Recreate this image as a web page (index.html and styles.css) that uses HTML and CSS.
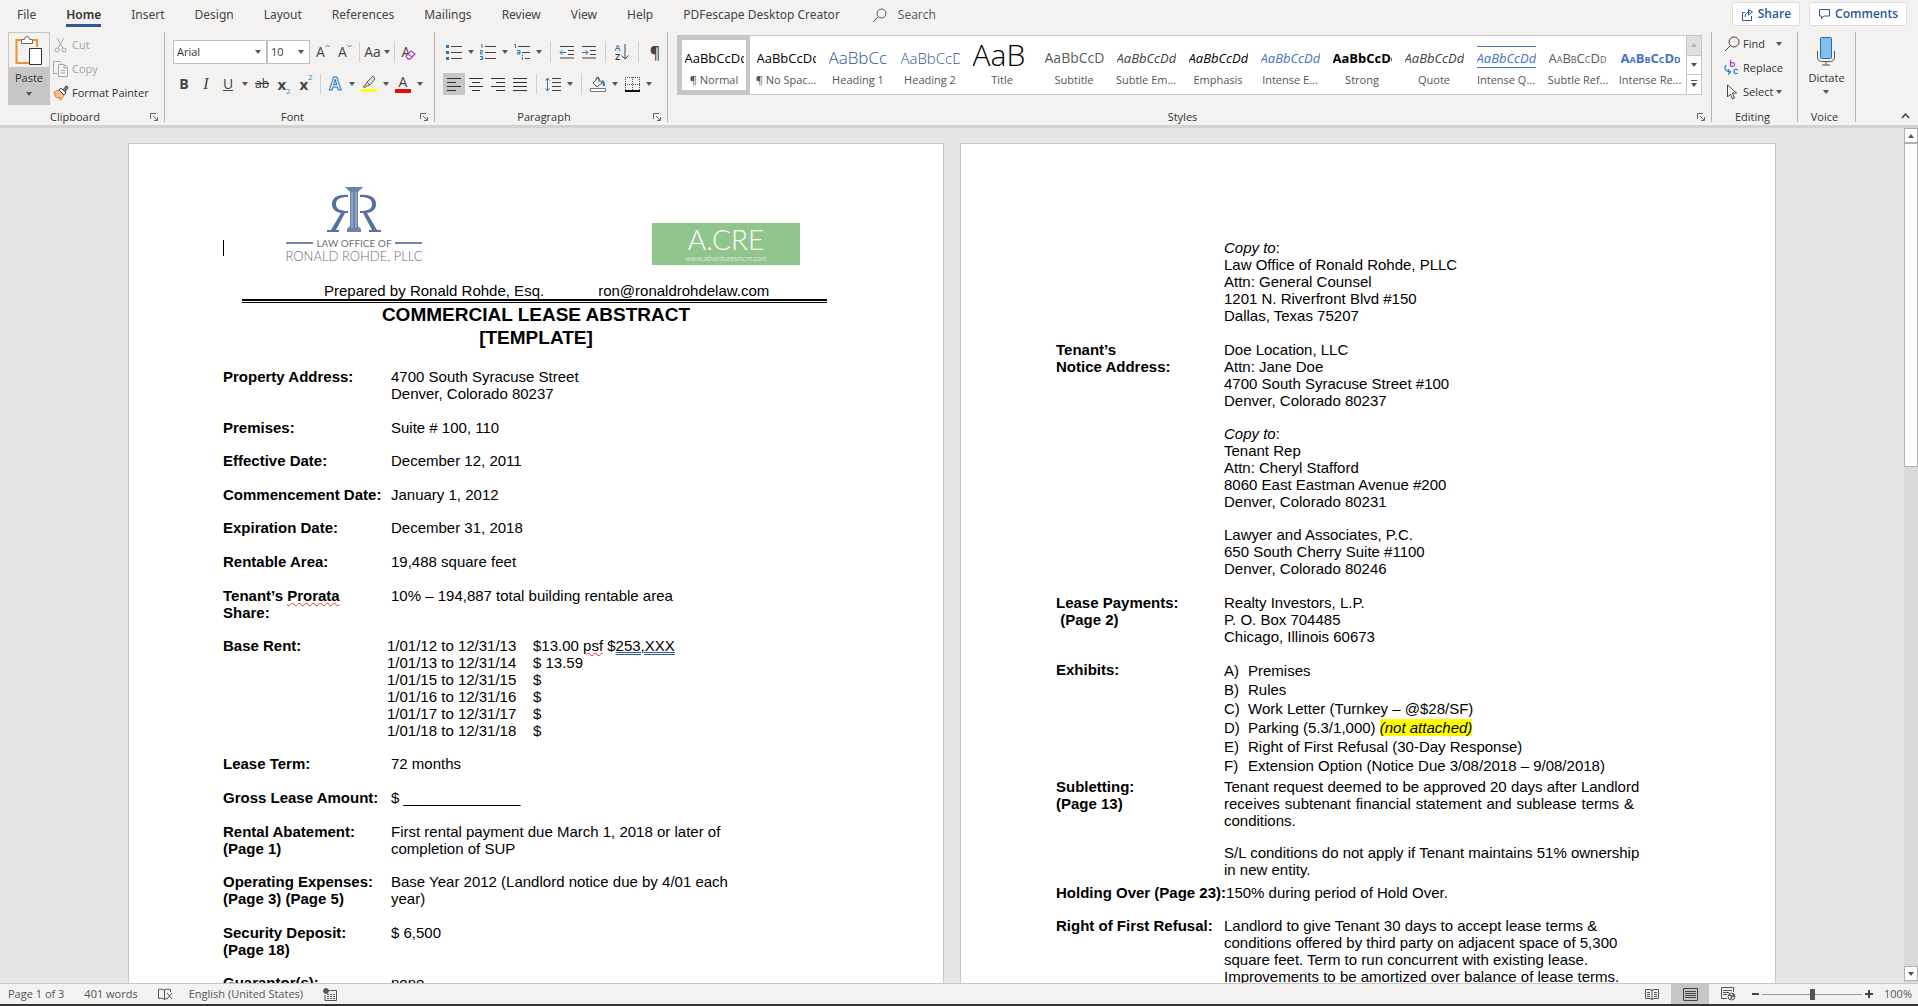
FILE: index.html
```html
<!DOCTYPE html>
<html lang="en">
<head>
<meta charset="utf-8">
<title>Commercial Lease Abstract</title>
<link rel="stylesheet" href="styles.css">
</head>
<body>
<header class="tabbar">
  <nav class="tabs">
    <button class="tab">File</button>
    <button class="tab active">Home</button>
    <button class="tab">Insert</button>
    <button class="tab">Design</button>
    <button class="tab">Layout</button>
    <button class="tab">References</button>
    <button class="tab">Mailings</button>
    <button class="tab">Review</button>
    <button class="tab">View</button>
    <button class="tab">Help</button>
    <button class="tab">PDFescape Desktop Creator</button>
  </nav>
  <label class="search">
    <svg width="15" height="15" viewBox="0 0 15 15" fill="none" stroke="#555"><circle cx="9.5" cy="5.5" r="4.5"/><path d="M6.3 8.7 1 14"/></svg>
    <input type="text" placeholder="Search" aria-label="Search">
  </label>
  <div class="actions">
    <button class="action"><svg width="13" height="13" viewBox="0 0 13 13" fill="none" stroke="#2b579a"><path d="M4 4.5H1.5v8h9V8M4 9c0-3 2-5 5-5M7.500 1.500 11.500 4l-4 3z"/></svg>Share</button>
    <button class="action"><svg width="13" height="12" viewBox="0 0 13 12" fill="none" stroke="#2b579a"><path d="M1.500 1.500h10v6.500H6L3.500 10.500V8h-2z"/></svg>Comments</button>
  </div>
</header>

<section class="ribbon">
  <div class="group clipboard">
    <div class="group-body">
      <button class="paste">
        <span class="paste-icon"><svg width="28" height="31" viewBox="0 0 28 31" fill="none"><path d="M6 5H1.500v23H14M18 5h4v7" stroke="#e8962e" stroke-width="2"/><path d="M6.500 8.500v-4h3c0-4 5-4 5 0h3v4z" fill="#fff" stroke="#666"/><path d="M14.500 13.500h12v16h-12z" fill="#fff" stroke="#333"/></svg></span>
        <span class="paste-label">Paste<i class="caret"></i></span>
      </button>
      <div class="stack">
        <button class="cmd off"><svg width="18" height="18" viewBox="0 0 18 18" fill="none" stroke="#a6a6a6"><path d="M5 2l6 10M12 2 6 12"/><circle cx="5" cy="14" r="2"/><circle cx="12" cy="14" r="2"/></svg>Cut</button>
        <button class="cmd off"><svg width="18" height="18" viewBox="0 0 18 18" fill="none" stroke="#a6a6a6"><path d="M5 13.500H1.500v-12H8l2 2"/><path d="M6.500 4.500h6l3 3v9h-9zM12 5v3h3M9 10.500h4M9 13h4"/></svg>Copy</button>
        <button class="cmd"><svg width="18" height="18" viewBox="0 0 18 18" fill="none"><path d="M2 8l5-2 5 5-3 5-2-1 1-2-3 1-2-2 1-2-2 0z" fill="#f6c48a" stroke="#e08a28"/><path d="M7 6l2-2 5 5-2 2z" fill="#fff" stroke="#444"/><path d="M11 6l3-4 2 1-1 2-2 3" fill="#888" stroke="#444"/></svg>Format Painter</button>
      </div>
    </div>
    <div class="group-label"><span>Clipboard</span><button class="launch" aria-label="Clipboard options"><svg width="8" height="8" viewBox="0 0 8 8" fill="none" stroke="#666"><path d="M.5 6V.5H6M3 3l4 4M7.500 4v3.500H4"/></svg></button></div>
  </div>

  <div class="group font">
    <div class="group-body rows">
      <div class="row">
        <div class="combo family"><select aria-label="Font"><option>Arial</option></select><i class="caret"></i></div>
        <div class="combo size"><select aria-label="Font size"><option>10</option></select><i class="caret"></i></div>
        <button class="tool letter grow" aria-label="Increase font size">A<svg width="5" height="4" viewBox="0 0 5 4" fill="none" stroke="#2b88c8"><path d="M.5 3 2.500 1l2 2"/></svg></button>
        <button class="tool letter grow" aria-label="Decrease font size">A<svg width="5" height="4" viewBox="0 0 5 4" fill="none" stroke="#2b88c8"><path d="M.5 1l2 2 2-2"/></svg></button>
        <i class="sep"></i>
        <button class="tool letter wide">Aa<i class="caret"></i></button>
        <i class="sep"></i>
        <button class="tool letter clear" aria-label="Clear formatting">A<svg width="11" height="10" viewBox="0 0 11 10" fill="#fff" stroke="#a54cb8" stroke-width="1.300"><path d="M1 6l5-5 4 3-5 5H3z"/><path d="M3 4l4 3"/></svg></button>
      </div>
      <div class="row">
        <button class="tool letter"><b>B</b></button>
        <button class="tool letter"><em class="serif">I</em></button>
        <button class="tool letter"><u>U</u></button>
        <button class="drop" aria-label="Underline styles"><i class="caret"></i></button>
        <button class="tool small"><s>ab</s></button>
        <button class="tool letter script"><b>x</b><sub>2</sub></button>
        <button class="tool letter script"><b>x</b><sup>2</sup></button>
        <i class="sep"></i>
        <button class="tool letter effect">A</button>
        <button class="drop" aria-label="Text effects"><i class="caret"></i></button>
        <button class="tool" aria-label="Highlight"><svg width="18" height="18" viewBox="0 0 18 18"><path d="M5 11l2-4 6-6 2 3-5 6-3 1-1 1H3z" fill="#ddd" stroke="#666"/><path d="M7 7l3 3" stroke="#666"/><path d="M1 14h16v3H1z" fill="#ff0"/></svg></button>
        <button class="drop" aria-label="Highlight colors"><i class="caret"></i></button>
        <button class="tool letter color">A</button>
        <button class="drop" aria-label="Font colors"><i class="caret"></i></button>
      </div>
    </div>
    <div class="group-label"><span>Font</span><button class="launch" aria-label="Font options"><svg width="8" height="8" viewBox="0 0 8 8" fill="none" stroke="#666"><path d="M.5 6V.5H6M3 3l4 4M7.500 4v3.500H4"/></svg></button></div>
  </div>

  <div class="group paragraph">
    <div class="group-body rows">
      <div class="row">
        <button class="tool" aria-label="Bullets"><svg width="16" height="16" viewBox="0 0 16 16"><path d="M0 1h3v3H0zM0 7h3v3H0zM0 13h3v3H0z" fill="#2b78b8"/><path d="M5 2.500h11M5 8.500h11M5 14.500h11" stroke="#444"/></svg></button>
        <button class="drop" aria-label="Bullet library"><i class="caret"></i></button>
        <button class="tool" aria-label="Numbering"><svg width="16" height="16" viewBox="0 0 16 16" fill="none"><path d="M1 .5h1V4M0 6.500h2.500v1.500H.5v2H3M0 12.500h2.500v3H0M1 14h1" stroke="#2b78b8"/><path d="M5 2.500h11M5 8.500h11M5 14.500h11" stroke="#444"/></svg></button>
        <button class="drop" aria-label="Numbering library"><i class="caret"></i></button>
        <button class="tool" aria-label="Multilevel list"><svg width="16" height="16" viewBox="0 0 16 16" fill="none"><path d="M0 .5h1.500V4M3 6.500h3V10H3.500V8.500H6M8.500 11v1M8.500 13v3" stroke="#2b78b8"/><path d="M4 2.500h12M8 8.500h8M11 14.500h5" stroke="#444"/></svg></button>
        <button class="drop" aria-label="Multilevel library"><i class="caret"></i></button>
        <i class="sep"></i>
        <button class="tool" aria-label="Decrease indent"><svg width="16" height="14" viewBox="0 0 16 14" fill="none"><path d="M1 1.500h14M9 5.500h6M9 9.500h6M1 13h14" stroke="#444"/><path d="M7 7.500H1M3.500 5 1 7.500 3.500 10" stroke="#2b78b8"/></svg></button>
        <button class="tool" aria-label="Increase indent"><svg width="16" height="14" viewBox="0 0 16 14" fill="none"><path d="M1 1.500h14M9 5.500h6M9 9.500h6M1 13h14" stroke="#444"/><path d="M1 7.500h6M4.500 5 7 7.500 4.500 10" stroke="#2b78b8"/></svg></button>
        <i class="sep"></i>
        <button class="tool sort" aria-label="Sort"><span class="az"><span>A</span><span>Z</span></span><svg width="8" height="16" viewBox="0 0 8 16" fill="none" stroke="#444"><path d="M4 0v15M.5 11.500 4 15l3.500-3.500"/></svg></button>
        <i class="sep"></i>
        <button class="tool letter mark">¶</button>
      </div>
      <div class="row">
        <button class="tool on" aria-label="Align left"><svg width="14" height="14" viewBox="0 0 14 14" stroke="#333"><path d="M0 1.500h14M0 5.500h9M0 9.500h14M0 13.500h9"/></svg></button>
        <button class="tool" aria-label="Center"><svg width="14" height="14" viewBox="0 0 14 14" stroke="#333"><path d="M0 1.500h14M3 5.500h8M0 9.500h14M3 13.500h8"/></svg></button>
        <button class="tool" aria-label="Align right"><svg width="14" height="14" viewBox="0 0 14 14" stroke="#333"><path d="M0 1.500h14M5 5.500h9M0 9.500h14M5 13.500h9"/></svg></button>
        <button class="tool" aria-label="Justify"><svg width="14" height="14" viewBox="0 0 14 14" stroke="#333"><path d="M0 1.500h14M0 5.500h14M0 9.500h14M0 13.500h14"/></svg></button>
        <i class="sep"></i>
        <button class="tool" aria-label="Line spacing"><svg width="16" height="15" viewBox="0 0 16 15" fill="none"><path d="M2.500 1v13M.5 3.500l2-2.500 2 2.500M.5 11.500l2 2.500 2-2.500" stroke="#2b78b8"/><path d="M7 1.500h9M7 5.500h9M7 9.500h9M7 13.500h9" stroke="#444"/></svg></button>
        <button class="drop" aria-label="Line spacing options"><i class="caret"></i></button>
        <i class="sep"></i>
        <button class="tool" aria-label="Shading"><svg width="16" height="16" viewBox="0 0 16 16" fill="none"><path d="M3 7l5-5 4 5-5 4zM6 4c0-4 3-4 3-1v3" stroke="#555"/><path d="M12 5c2 1 2 3 2 5" stroke="#2b78b8" stroke-width="2"/><path d="M.5 12.500h15v3H.5z" fill="#fff" stroke="#777"/></svg></button>
        <button class="drop" aria-label="Shading colors"><i class="caret"></i></button>
        <button class="tool" aria-label="Borders"><svg width="15" height="15" viewBox="0 0 15 15" fill="none" stroke="#555"><path d="M.5 0v14M14.500 0v14M7.500 0v14M0 .5h15M0 7.500h15" stroke-dasharray="1 1"/><path d="M0 14h15" stroke="#111" stroke-width="2"/></svg></button>
        <button class="drop" aria-label="Border styles"><i class="caret"></i></button>
      </div>
    </div>
    <div class="group-label"><span>Paragraph</span><button class="launch" aria-label="Paragraph options"><svg width="8" height="8" viewBox="0 0 8 8" fill="none" stroke="#666"><path d="M.5 6V.5H6M3 3l4 4M7.500 4v3.500H4"/></svg></button></div>
  </div>

  <div class="group styles">
    <div class="group-body">
      <div class="gallery">
        <button class="style chosen"><span class="sample">AaBbCcDd</span><span class="name">¶ Normal</span></button>
        <button class="style"><span class="sample">AaBbCcDd</span><span class="name">¶ No Spac...</span></button>
        <button class="style"><span class="sample head1">AaBbCc</span><span class="name">Heading 1</span></button>
        <button class="style"><span class="sample head2">AaBbCcD</span><span class="name">Heading 2</span></button>
        <button class="style"><span class="sample title">AaB</span><span class="name">Title</span></button>
        <button class="style"><span class="sample subtitle">AaBbCcD</span><span class="name">Subtitle</span></button>
        <button class="style"><span class="sample slant soft">AaBbCcDd</span><span class="name">Subtle Em...</span></button>
        <button class="style"><span class="sample slant">AaBbCcDd</span><span class="name">Emphasis</span></button>
        <button class="style"><span class="sample slant blue">AaBbCcDd</span><span class="name">Intense E...</span></button>
        <button class="style"><span class="sample strong">AaBbCcDd</span><span class="name">Strong</span></button>
        <button class="style"><span class="sample slant soft">AaBbCcDd</span><span class="name">Quote</span></button>
        <button class="style"><span class="sample slant blue ruled">AaBbCcDd</span><span class="name">Intense Q...</span></button>
        <button class="style"><span class="sample caps">AaBbCcDd</span><span class="name">Subtle Ref...</span></button>
        <button class="style"><span class="sample caps strong blue">AaBbCcDd</span><span class="name">Intense Re...</span></button>
        <div class="gallery-nav">
          <button class="dim" aria-label="Previous styles"><i class="caret up"></i></button>
          <button aria-label="Next styles"><i class="caret"></i></button>
          <button aria-label="More styles"><i class="caret lined"></i></button>
        </div>
      </div>
    </div>
    <div class="group-label"><span>Styles</span><button class="launch" aria-label="Styles options"><svg width="8" height="8" viewBox="0 0 8 8" fill="none" stroke="#666"><path d="M.5 6V.5H6M3 3l4 4M7.500 4v3.500H4"/></svg></button></div>
  </div>

  <div class="group editing">
    <div class="group-body">
      <div class="stack">
        <button class="cmd"><svg width="16" height="16" viewBox="0 0 16 16" fill="none" stroke="#444"><circle cx="10" cy="6" r="5"/><path d="M6.500 9.500 1 15"/></svg>Find<i class="caret"></i></button>
        <button class="cmd"><svg width="16" height="16" viewBox="0 0 16 16" fill="none" stroke-width="1.300"><path d="M6.500 0v6.500M6.500 4c0-2 4-2 4 .5s-4 2.500-4 .5" stroke="#a54cb8"/><path d="M14 10c-3-2-4 0-4 1.500s1 3 4 1.500M2 5C0 8 1 11 6 12M4 9.500 6.500 12 4 14.500" stroke="#2b88c8"/></svg>Replace</button>
        <button class="cmd tightly"><svg width="16" height="16" viewBox="0 0 16 16" fill="#fff" stroke="#444"><path d="M3.500 1v12l3-3 2 5 2-1-2-5h4z"/></svg>Select<i class="caret"></i></button>
      </div>
    </div>
    <div class="group-label"><span>Editing</span></div>
  </div>

  <div class="group voice">
    <div class="group-body">
      <button class="dictate"><svg width="22" height="30" viewBox="0 0 22 30" fill="none"><rect x="5.500" y="1.500" width="11" height="21" rx="1" fill="#83beec" stroke="#1e6fb4"/><path d="M2.500 15v6c0 3 2 4.500 4 4.500h9c2 0 4-1.500 4-4.500v-6M11 26v3M7 29h8" stroke="#555"/></svg>Dictate<i class="caret"></i></button>
    </div>
    <div class="group-label"><span>Voice</span></div>
  </div>
  <div class="ribbon-end">
    <button class="collapse" aria-label="Collapse the ribbon"><svg width="9" height="6" viewBox="0 0 9 6" fill="none" stroke="#444" stroke-width="1.500"><path d="M1 5l3.500-4L8 5"/></svg></button>
  </div>
</section>

<div class="workspace">
  <main class="pages">
    <article class="page">
      <div class="letterhead">
        <span class="cursor"></span>
        <div class="firm">
          <svg width="56" height="46" viewBox="0 0 56 46" fill="#56709f"><path d="M19 0h18l-3 3-2 2v34l3 3v3H21v-3l3-3V5l-2-2z" fill="#6a82ac"/><path d="M26 5v36M30 5v36" stroke="#b7c3da" fill="none"/><path d="M22 8C10 7 6 12 6 17c0 5 3 8 9 9L5 43H1v2h12v-2h-3L19 26h3v-2c-8 0-12-2-12-7s4-7 12-7zM34 8c12-1 16 4 16 9 0 5-3 8-9 9l10 17h4v2H43v-2h3L37 26h-3v-2c8 0 12-2 12-7s-4-7-12-7z"/></svg>
          <div class="firm-top"><i></i>LAW OFFICE OF<i></i></div>
          <div class="firm-name">RONALD ROHDE, PLLC</div>
        </div>
        <div class="badge"><span class="badge-name">A.CRE</span><span class="badge-url">www.adventuresincre.com</span></div>
      </div>
      <div class="prepared"><span>Prepared by Ronald Rohde, Esq.</span><span>ron@ronaldrohdelaw.com</span></div>
      <div class="rule"></div>
      <h1>COMMERCIAL LEASE ABSTRACT<br>[TEMPLATE]</h1>
      <dl class="terms">
        <div class="term"><dt>Property Address:</dt><dd>4700 South Syracuse Street<br>Denver, Colorado 80237</dd></div>
        <div class="term snug"><dt>Premises:</dt><dd>Suite # 100, 110</dd></div>
        <div class="term"><dt>Effective Date:</dt><dd>December 12, 2011</dd></div>
        <div class="term snug"><dt>Commencement Date:</dt><dd>January 1, 2012</dd></div>
        <div class="term"><dt>Expiration Date:</dt><dd>December 31, 2018</dd></div>
        <div class="term"><dt>Rentable Area:</dt><dd>19,488 square feet</dd></div>
        <div class="term snug"><dt>Tenant’s <span class="misspelt">Prorata</span><br>Share:</dt><dd>10% – 194,887 total building rentable area</dd></div>
        <div class="term rent snug"><dt>Base Rent:</dt><dd>
          <span>1/01/12 to 12/31/13</span><span>$13.00 <span class="misspelt">psf</span> $<span class="grammar">253,XXX</span></span>
          <span>1/01/13 to 12/31/14</span><span>$ 13.59</span>
          <span>1/01/15 to 12/31/15</span><span>$</span>
          <span>1/01/16 to 12/31/16</span><span>$</span>
          <span>1/01/17 to 12/31/17</span><span>$</span>
          <span>1/01/18 to 12/31/18</span><span>$</span>
        </dd></div>
        <div class="term"><dt>Lease Term:</dt><dd>72 months</dd></div>
        <div class="term"><dt>Gross Lease Amount:</dt><dd>$ ______________</dd></div>
        <div class="term snug"><dt>Rental Abatement:<br>(Page 1)</dt><dd>First rental payment due March 1, 2018 or later of<br>completion of SUP</dd></div>
        <div class="term"><dt>Operating Expenses:<br>(Page 3) (Page 5)</dt><dd>Base Year 2012 (Landlord notice due by 4/01 each<br>year)</dd></div>
        <div class="term snug"><dt>Security Deposit:<br>(Page 18)</dt><dd>$ 6,500</dd></div>
        <div class="term"><dt>Guarantor(s):</dt><dd>none</dd></div>
      </dl>
    </article>

    <article class="page second">
      <dl class="terms">
        <div class="term"><dt></dt><dd><em>Copy to</em>:<br>Law Office of Ronald Rohde, PLLC<br>Attn: General Counsel<br>1201 N. Riverfront Blvd #150<br>Dallas, Texas 75207</dd></div>
        <div class="term"><dt>Tenant’s<br>Notice Address:</dt><dd>
          <p>Doe Location, LLC<br>Attn: Jane Doe<br>4700 South Syracuse Street #100<br>Denver, Colorado 80237</p>
          <p><em>Copy to</em>:<br>Tenant Rep<br>Attn: Cheryl Stafford<br>8060 East Eastman Avenue #200<br>Denver, Colorado 80231</p>
          <p>Lawyer and Associates, P.C.<br>650 South Cherry Suite #1100<br>Denver, Colorado 80246</p>
        </dd></div>
        <div class="term snug"><dt>Lease Payments:<br>&nbsp;(Page 2)</dt><dd>Realty Investors, L.P.<br>P. O. Box 704485<br>Chicago, Illinois 60673</dd></div>
        <div class="term close"><dt>Exhibits:</dt><dd>
          <ol class="exhibits">
            <li><span>A)</span>Premises</li>
            <li><span>B)</span>Rules</li>
            <li><span>C)</span>Work Letter (Turnkey – @$28/SF)</li>
            <li><span>D)</span><span>Parking (5.3/1,000) <mark>(not attached)</mark></span></li>
            <li><span>E)</span>Right of First Refusal (30-Day Response)</li>
            <li><span>F)</span>Extension Option (Notice Due 3/08/2018 – 9/08/2018)</li>
          </ol>
        </dd></div>
        <div class="term near"><dt>Subletting:<br>(Page 13)</dt><dd>
          <p>Tenant request deemed to be approved 20 days after Landlord<br><span class="spread">receives subtenant financial statement and sublease terms &amp;</span>conditions.</p>
          <p>S/L conditions do not apply if Tenant maintains 51% ownership<br>in new entity.</p>
        </dd></div>
        <div class="term snug"><dt>Holding Over (Page 23):</dt><dd>150% during period of Hold Over.</dd></div>
        <div class="term"><dt>Right of First Refusal:</dt><dd>Landlord to give Tenant 30 days to accept lease terms &amp;<br>conditions offered by third party on adjacent space of 5,300<br>square feet. Term to run concurrent with existing lease.<br>Improvements to be amortized over balance of lease terms.</dd></div>
      </dl>
    </article>
  </main>
  <div class="scrollbar">
    <button aria-label="Scroll up"><i class="caret up"></i></button>
    <div class="thumb"></div>
    <button class="down" aria-label="Scroll down"><i class="caret"></i></button>
  </div>
</div>

<footer class="status">
  <span class="page-count">Page 1 of 3</span>
  <span class="words">401 words</span>
  <svg class="proof" width="15" height="13" viewBox="0 0 15 13" fill="none" stroke="#555"><path d="M6.500 11.500V2c-2-1-4-1-6-.5v9c2-.5 4-.5 6 1zM6.500 2c2-1 4-1 6-.5V4M6.500 11.500c1-.7 2-1 3-1M9 5l5 6M14 5 9 11"/></svg>
  <span>English (United States)</span>
  <svg class="macro" width="14" height="13" viewBox="0 0 14 13" fill="none" stroke="#555"><path d="M6 2.500h7.500v10H2V7"/><path d="M6 2.500h7.500M4 6.500h8M4 8.500h8M4 10.500h8" stroke-dasharray="2 1"/><circle cx="3" cy="3" r="2.500" fill="#555"/></svg>
  <div class="views">
    <button aria-label="Read mode"><svg width="14" height="13" viewBox="0 0 14 13" fill="none" stroke="#555"><path d="M7 1.500v10M.5 1.500H5l2 1 2-1h4.500v9H9l-2 1-2-1H.5zM2 4.500h3M2 6.500h3M2 8.500h3M9 4.500h3M9 6.500h3M9 8.500h3"/></svg></button>
    <button class="on" aria-label="Print layout"><svg width="15" height="13" viewBox="0 0 15 13" fill="none" stroke="#444"><path d="M.5.5h14v12H.5zM2 3.500h11M2 5.500h11M2 7.500h11M2 9.500h11"/></svg></button>
    <button aria-label="Web layout"><svg width="15" height="14" viewBox="0 0 15 14" fill="none" stroke="#555"><path d="M6 11.500H.5V.5h12V5M2 3.500h9M2 5.500h6M2 7.500h4"/><circle cx="10.500" cy="9.500" r="3.500"/><path d="M8 8l3 1-1 3M12 7l1 3" stroke-width="1.500"/></svg></button>
  </div>
  <div class="zoom">
    <button aria-label="Zoom out"><svg width="7" height="8" viewBox="0 0 7 8"><path d="M0 4h7" stroke="#444" stroke-width="2"/></svg></button>
    <input type="range" min="0" max="100" value="50" aria-label="Zoom">
    <button aria-label="Zoom in"><svg width="8" height="8" viewBox="0 0 8 8"><path d="M0 4h8M4 0v8" stroke="#444" stroke-width="2"/></svg></button>
    <span>100%</span>
  </div>
</footer>
</body>
</html>
```
FILE: styles.css
```css
* { box-sizing: border-box; }

body {
  margin: 0;
  height: 100vh;
  display: flex;
  flex-direction: column;
  overflow: hidden;
  background: #e6e6e6;
  color: #333;
  font: 11px/16px "Open Sans", "Noto Sans", sans-serif;
}

button, input, select {
  margin: 0;
  padding: 0;
  border: 0;
  background: none;
  color: inherit;
  font: inherit;
}

svg { flex: none; }

/* Tab strip */
.tabbar {
  display: flex;
  flex: none;
  height: 31px;
  background: #f3f2f1;
  font-size: 12px;
}
.tabs { display: flex; gap: 30px; padding-left: 17px; font-family: "Noto Sans", sans-serif; }
.tab { height: 27px; padding: 5px 0 0; border-bottom: 3px solid transparent; color: #444; white-space: nowrap; }
.tab.active { border-color: #2b579a; font-weight: 600; color: #333; }
.search { display: flex; align-items: center; gap: 11px; height: 30px; margin-left: 32px; flex: 1; }
.search input { width: 120px; }
.search input::placeholder { color: #555; opacity: 1; }
.actions { display: flex; gap: 9px; padding: 2px 11px 0 0; }
.action {
  display: flex;
  align-items: center;
  gap: 4px;
  height: 24px;
  padding: 0 8px;
  background: #fff;
  border: 1px solid #e1dfdd;
  border-radius: 2px;
  color: #2b579a;
  font-weight: 600;
}

/* Ribbon */
.ribbon {
  display: flex;
  flex: none;
  height: 97px;
  padding-top: 1px;
  background: #f3f2f1;
  border-bottom: 3px solid #d2d2d2;
}
.group { display: flex; flex-direction: column; height: 90px; border-right: 1px solid #b5b3b1; }
.group-body { display: flex; flex: 1; min-height: 0; }
.group-label { display: flex; align-items: center; height: 13px; padding-right: 4px; margin-bottom: -1px; }
.group-label span { flex: 1; text-align: center; }
.launch { display: flex; width: 10px; }

.clipboard { width: 165px; }
.clipboard .group-body { padding-left: 8px; }
.font { width: 270px; }
.paragraph { width: 233px; }
.styles { flex: 1; min-width: 0; }
.editing { width: 86px; }
.voice { width: 58px; }

.caret { flex: none; width: 0; height: 0; border: 3px solid transparent; border-top: 4px solid #555; border-bottom: 0; }
.caret.up { border-top: 0; border-bottom: 4px solid #555; }

.paste { display: flex; flex-direction: column; width: 42px; height: 73px; flex: none; }
.paste-icon { display: flex; justify-content: center; align-items: center; width: 100%; height: 36px; border: 1px solid #c8c6c4; }
.paste-label { display: flex; flex-direction: column; align-items: center; gap: 6px; width: 100%; height: 37px; padding-top: 2px; background: #c8c6c4; }

.stack { display: flex; flex-direction: column; }
.cmd { display: flex; align-items: center; gap: 2px; height: 24px; white-space: nowrap; }
.clipboard .stack { padding: 1px 0 0 2px; }
.cmd.off { color: #a6a6a6; }

.rows { flex-direction: column; gap: 8px; padding: 8px 0 0 8px; }
.row { display: flex; align-items: center; height: 24px; }
.sep { width: 1px; height: 20px; margin: 0 5px; background: #d2d0ce; }
.font .sep { margin: 0 3px; }
.combo { display: flex; align-items: center; height: 24px; padding-right: 5px; background: #fff; border: 1px solid #c0c0c0; }
.combo select { flex: 1; width: 0; padding-left: 3px; appearance: none; }
.family { width: 94px; }
.size { width: 43px; margin-right: 2px; }
.tool { display: flex; justify-content: center; align-items: center; width: 22px; height: 22px; }
.tool.on { background: #c8c6c4; }
.drop { display: flex; justify-content: center; align-items: center; width: 12px; height: 22px; }
.letter { font-size: 14px; color: #444; }
.letter svg { align-self: flex-start; margin-top: 3px; }
.letter.wide { width: 28px; gap: 3px; }
.letter.clear svg { align-self: flex-end; margin: 0 0 3px -5px; }
.letter.mark { font-size: 16px; font-weight: 600; }
.small { width: 18px; margin: 0 2px; font-size: 12px; }
.serif { font-family: "Liberation Serif", serif; font-size: 16px; }
.script { font-size: 15px; }
.script sub, .script sup { color: #2b88c8; font-size: 8px; line-height: 8px; }
.script sub { align-self: flex-end; }
.script sup { align-self: flex-start; }
.effect { color: #fff; font-size: 17px; font-weight: 700; -webkit-text-stroke: 1px #1f77b8; }
.color { width: 16px; height: 18px; margin: 0 3px; line-height: 14px; border-bottom: 4px solid #e00b0b; }
.sort { gap: 1px; }
.az { display: flex; flex-direction: column; font-size: 9px; line-height: 9px; font-weight: 600; }
.az span:first-child { color: #2b78b8; }

/* Style gallery */
.gallery { display: flex; flex: 1; height: 60px; margin: 3px 9px 0; background: #fff; border: 1px solid #c8c6c4; }
.style { display: flex; flex-direction: column; align-items: center; flex: 1 1 0; min-width: 0; padding-top: 4px; border: 4px solid transparent; }
.style.chosen { border-color: #c6c6c6; }
.sample { width: 59px; height: 28px; overflow: hidden; font-size: 13px; line-height: 28px; text-align: left; white-space: nowrap; color: #000; }
.name { line-height: 20px; white-space: nowrap; color: #555; }
.head1 { font-size: 17px; color: #2f5496; font-weight: 300; }
.head2 { font-size: 15px; color: #2f5496; font-weight: 300; }
.title { font-size: 30px; line-height: 22px; font-weight: 300; }
.subtitle { font-size: 14px; color: #5a5a5a; }
.slant { font-style: italic; }
.soft { color: #404040; }
.strong { font-weight: 700; }
.caps { font-variant: small-caps; color: #5a5a5a; }
.sample.blue { color: #4472c4; }
.ruled { height: 24px; margin: 2px 0; line-height: 22px; border-top: 1px solid #4472c4; border-bottom: 1px solid #4472c4; }
.gallery-nav { display: flex; flex-direction: column; width: 15px; border-left: 1px solid #c8c6c4; }
.gallery-nav button { display: flex; flex: 1; justify-content: center; align-items: center; border-bottom: 1px solid #c8c6c4; }
.gallery-nav button:last-child { border-bottom: 0; }
.gallery-nav .dim { background: #e1dfdd; }
.dim .caret { border-bottom-color: #b5b3b1; }
.caret.lined { position: relative; }
.caret.lined::before { content: ""; position: absolute; left: -3px; top: -7px; width: 6px; height: 1px; background: #555; }

.editing .stack { padding-left: 12px; }
.editing .cmd { gap: 3px; }
.editing .cmd .caret { margin-left: 8px; }
.editing .tightly .caret { margin-left: 0; }
.voice .group-body { justify-content: center; }
.dictate { display: flex; flex-direction: column; align-items: center; gap: 4px; padding-top: 4px; }
.ribbon-end { display: flex; align-items: flex-end; justify-content: flex-end; width: 62px; padding: 0 8px 2px 0; }

/* Document area */
.workspace { display: flex; flex: 1; min-height: 0; }
.pages { display: flex; flex: 1; justify-content: center; gap: 16px; padding: 15px 16px 0; overflow: hidden; }
.page {
  flex: 1 1 0;
  max-width: 816px;
  height: 1160px;
  padding: 43px 0 0;
  background: #fff;
  border: 1px solid #c6c6c6;
  color: #000;
  font: 15px/17px "Liberation Sans", Arial, sans-serif;
}
.page.second { padding-top: 95px; }

.letterhead { display: flex; align-items: flex-start; height: 95px; padding-left: 94px; }
.cursor { width: 1px; height: 16px; margin-top: 53px; background: #000; }
.firm { display: flex; flex-direction: column; align-items: center; width: 136px; margin-left: 62px; color: #6b6f76; font-family: Lato, sans-serif; white-space: nowrap; }
.firm-top { display: flex; align-items: center; gap: 3px; width: 100%; margin-top: 3px; font-size: 10px; line-height: 14px; }
.firm-top i { flex: 1; height: 2px; background: #7186b3; }
.firm-name { font-size: 13px; line-height: 13px; font-weight: 300; }
.badge { display: flex; flex-direction: column; align-items: center; width: 148px; height: 42px; margin: 36px 0 0 230px; background: #90c58b; color: #fff; font-family: Lato, sans-serif; }
.badge-name { font-size: 28px; line-height: 32px; font-weight: 300; }
.badge-url { font-size: 7px; line-height: 6px; color: #d5ebd2; }

.prepared { display: flex; gap: 54px; padding-left: 195px; white-space: nowrap; }
.rule { height: 4px; margin: 0 116px 0 113px; border-top: 2px solid #000; border-bottom: 1px solid #000; }
h1 { margin: 0 0 19px; font-size: 19px; line-height: 23px; text-align: center; }

.terms { margin: 0; padding: 0 140px 0 94px; }
.second .terms { padding-left: 95px; }
.term { display: grid; grid-template-columns: minmax(168px, max-content) 1fr; margin-bottom: 17px; }
.term.snug { margin-bottom: 16px; }
.term.close { margin-bottom: 3px; }
.term.near { margin-bottom: 6px; }
.term dt { font-weight: 700; white-space: nowrap; }
.term dd { margin: 0; white-space: nowrap; }
.term p { margin: 0 0 16px; }
.term.near p { margin-bottom: 15px; }
.term p:last-child, .term.near p:last-child { margin-bottom: 0; }
.term.rent { grid-template-columns: 164px 1fr; }
.rent dd { display: grid; grid-template-columns: 146px 1fr; }
.misspelt { text-decoration: underline wavy #d33 1px; text-underline-offset: 1px; }
.grammar { text-decoration: underline double #2b579a 1px; text-underline-offset: 1px; }
.exhibits { margin: 0; padding: 0; list-style: none; line-height: 19px; }
.exhibits li { display: flex; }
.exhibits li > span:first-child { width: 24px; }
mark { background: #ff0; font-style: italic; }
.spread { display: block; width: 410px; text-align-last: justify; white-space: normal; }

/* Scrollbar */
.scrollbar { display: flex; flex-direction: column; flex: none; width: 14px; padding-bottom: 2px; background: #dadada; }
.scrollbar button { display: flex; justify-content: center; align-items: center; height: 15px; background: #fff; border: 1px solid #b0b0b0; }
.thumb { height: 38%; background: #fff; border: 1px solid #b0b0b0; }
.scrollbar .down { margin-top: auto; }

/* Status bar */
.status { display: flex; align-items: center; flex: none; height: 23px; padding-left: 8px; background: #f3f2f1; border-top: 1px solid #c8c6c4; border-bottom: 2px solid #333; color: #555; }
.words { margin: 0 20px; }
.proof { margin-right: 16px; }
.macro { margin-left: 20px; }
.views { display: flex; height: 100%; margin-left: auto; }
.views button { display: flex; justify-content: center; align-items: center; width: 38px; }
.views .on { background: #c8c6c4; }
.zoom { display: flex; align-items: center; gap: 3px; padding: 0 6px 0 5px; }
.zoom button { display: flex; }
.zoom span { margin-left: 8px; }
.zoom input { width: 100px; height: 16px; appearance: none; background: linear-gradient(#999, #999) center / 100% 1px no-repeat; }
.zoom input::-webkit-slider-thumb { appearance: none; width: 5px; height: 11px; background: #555; }
```
